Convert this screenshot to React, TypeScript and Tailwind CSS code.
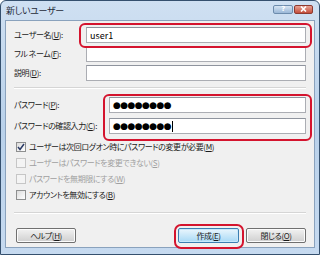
const font = "[font-family:'Noto_Sans_CJK_JP',sans-serif] [font-feature-settings:'palt']";

const Key = ({ k }: { k: string }) => (
  <>
    (<span className="underline">{k}</span>)
  </>
);

const TextBox = ({ value, caret }: { value?: string; caret?: boolean }) => (
  <div className="flex h-[16px] flex-1 items-center border border-[#abadb3] border-t-[#8f949e] bg-white px-[3px]">
    {value && <span className="text-[9px] leading-none tracking-normal text-black">{value}</span>}
    {caret && <span className="ml-[1px] h-[10px] w-px bg-black" />}
  </div>
);

const Dots = ({ caret }: { caret?: boolean }) => (
  <div className="flex h-[16px] flex-1 items-center border border-[#abadb3] border-t-[#8f949e] bg-white pl-[3px]">
    <span className="text-[9px] leading-none tracking-[-0.6px] text-black [font-family:'DejaVu_Sans',sans-serif]">
      ●●●●●●●●
    </span>
    {caret && <span className="ml-[1px] h-[11px] w-px bg-black" />}
  </div>
);

const Check = ({
  label,
  k,
  checked,
  disabled,
}: {
  label: string;
  k: string;
  checked?: boolean;
  disabled?: boolean;
}) => (
  <div className="flex h-[16px] items-center gap-[3px]">
    <div
      className={
        disabled
          ? "flex h-[10px] w-[10px] items-center justify-center border border-[#c6c6c6] bg-[#f4f4f4]"
          : "flex h-[10px] w-[10px] items-center justify-center border border-[#8e8f8f] bg-gradient-to-br from-[#dcdcdc] to-white"
      }
    >
      {checked && (
        <svg width="8" height="8" viewBox="0 0 8 8">
          <path d="M1 4 L3 6.5 L7 1" fill="none" stroke="#2b3b66" strokeWidth="1.5" />
        </svg>
      )}
    </div>
    <span className={disabled ? "text-[#a0a0a0]" : "text-[#1a1a1a]"}>
      {label}
      <Key k={k} />
    </span>
  </div>
);

const Button = ({ children, primary }: { children: React.ReactNode; primary?: boolean }) => (
  <div
    className={
      primary
        ? "flex h-[15px] w-[61px] items-center justify-center rounded-[2px] border border-[#3c7fb1] bg-gradient-to-b from-[#eaf6fd] to-[#a7d9f5] shadow-[inset_0_0_0_1px_#c8e8fb]"
        : "flex h-[15px] w-[60px] items-center justify-center rounded-[2px] border border-[#707070] bg-gradient-to-b from-[#f2f2f2] to-[#cfcfcf] shadow-[inset_0_0_0_1px_#fcfcfc]"
    }
  >
    <span className="leading-none">{children}</span>
  </div>
);

export default function App() {
  return (
    <div className={`${font} relative flex h-[255px] w-[320px] flex-col overflow-hidden rounded-t-[6px] border border-[#35506e] bg-gradient-to-b from-[#cfe0f2] via-[#b9d1ea] to-[#c6daf0] text-[8px] leading-none tracking-[-0.4px] text-[#1a1a1a]`}>
      {/* title bar */}
      <div className="flex h-[19px] shrink-0 items-center justify-between pl-[5px] pr-[6px]">
        <span className="text-[9px] tracking-[-0.3px] text-[#1e2a38]">新しいユーザー</span>
        <div className="mt-[-3px] flex gap-[1px]">
          <div className="flex h-[9px] w-[20px] items-center justify-center rounded-[2px] border border-[#6d8cad] bg-gradient-to-b from-[#d6e4f2] to-[#9bb8d8]">
            <span className="text-[7px] font-bold leading-none text-white [font-family:'DejaVu_Sans',sans-serif]">?</span>
          </div>
          <div className="flex h-[9px] w-[19px] items-center justify-center rounded-[2px] border border-[#8e3a30] bg-gradient-to-b from-[#e8a193] to-[#c24c3b]">
            <svg width="7" height="6" viewBox="0 0 7 6">
              <path d="M1 0.5 L6 5.5 M6 0.5 L1 5.5" stroke="white" strokeWidth="1.6" />
            </svg>
          </div>
        </div>
      </div>

      {/* client area */}
      <div className="mx-[4px] mb-[6px] flex flex-1 flex-col border border-[#8aa2bd] bg-[#f0f0f0] px-[8px] pt-[6px]">
        <div className="flex flex-col gap-[3px]">
          <div className="flex items-center">
            <span className="w-[72px]">ユーザー名<Key k="U" />:</span>
            <TextBox value="user1" />
          </div>
          <div className="flex items-center">
            <span className="w-[72px]">フル ネーム<Key k="F" />:</span>
            <TextBox />
          </div>
          <div className="flex items-center">
            <span className="w-[72px]">説明<Key k="D" />:</span>
            <TextBox />
          </div>
        </div>

        <div className="mt-[6px] h-[2px] border-t border-b border-t-[#d5d5d5] border-b-white" />

        <div className="mt-[8px] flex flex-col gap-[5px]">
          <div className="flex items-center">
            <span className="w-[95px]">パスワード<Key k="P" />:</span>
            <Dots />
          </div>
          <div className="flex items-center">
            <span className="w-[95px]">パスワードの確認入力<Key k="C" />:</span>
            <Dots caret />
          </div>
        </div>

        <div className="mt-[5px] flex flex-col pl-[2px]">
          <Check label="ユーザーは次回ログオン時にパスワードの変更が必要" k="M" checked />
          <Check label="ユーザーはパスワードを変更できない" k="S" disabled />
          <Check label="パスワードを無期限にする" k="W" disabled />
          <Check label="アカウントを無効にする" k="B" />
        </div>

        <div className="mt-[9px] h-[2px] border-t border-b border-t-[#d5d5d5] border-b-white" />

        <div className="mt-[14px] flex items-center justify-between pl-[2px]">
          <Button>
            ヘルプ<Key k="H" />
          </Button>
          <div className="flex gap-[7px]">
            <Button primary>
              作成<Key k="E" />
            </Button>
            <Button>
              閉じる<Key k="O" />
            </Button>
          </div>
        </div>
      </div>

      {/* red annotation rings */}
      <div className="pointer-events-none absolute left-[78px] top-[22px] h-[25px] w-[233px] rounded-[6px] border-[2.5px] border-[#d4142e]" />
      <div className="pointer-events-none absolute left-[102px] top-[93px] h-[47px] w-[209px] rounded-[6px] border-[2.5px] border-[#d4142e]" />
      <div className="pointer-events-none absolute left-[173px] top-[223px] h-[25px] w-[70px] rounded-[7px] border-[2.5px] border-[#d4142e]" />
    </div>
  );
}
